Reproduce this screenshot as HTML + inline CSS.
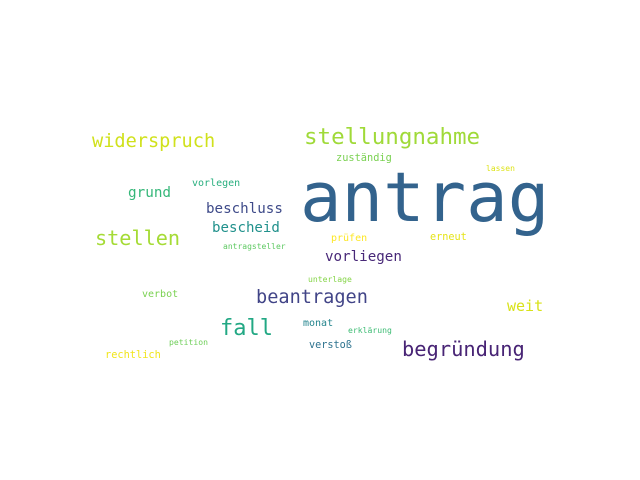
<!DOCTYPE html>
<html><head><meta charset="utf-8"><style>
html,body{margin:0;padding:0;background:#fff;width:640px;height:480px;overflow:hidden}
span{position:absolute;font-family:"DejaVu Sans Mono","Liberation Mono",monospace;line-height:1;white-space:nowrap}
</style></head><body>
<span style="left:300px;top:164px;font-size:69px;color:#33638d">antrag</span>
<span style="left:304px;top:126px;font-size:22.5px;color:#a0da39">stellungnahme</span>
<span style="left:92px;top:133px;font-size:18.6px;color:#d0e11c">widerspruch</span>
<span style="left:336px;top:153px;font-size:10.3px;color:#7ad151">zuständig</span>
<span style="left:486px;top:165px;font-size:8px;color:#dde318">lassen</span>
<span style="left:128px;top:186px;font-size:14.3px;color:#35b779">grund</span>
<span style="left:192px;top:179px;font-size:10px;color:#29af7f">vorlegen</span>
<span style="left:206px;top:202px;font-size:14.2px;color:#3e4a89">beschluss</span>
<span style="left:212px;top:221px;font-size:14.1px;color:#21918c">bescheid</span>
<span style="left:95px;top:228px;font-size:20.2px;color:#a5db36">stellen</span>
<span style="left:223px;top:243px;font-size:8px;color:#5ec962">antragsteller</span>
<span style="left:331px;top:234px;font-size:10px;color:#fde725">prüfen</span>
<span style="left:430px;top:233px;font-size:10.2px;color:#e5e419">erneut</span>
<span style="left:325px;top:250px;font-size:14.2px;color:#482878">vorliegen</span>
<span style="left:308px;top:275px;font-size:8.1px;color:#86d549">unterlage</span>
<span style="left:142px;top:290px;font-size:10px;color:#7ad151">verbot</span>
<span style="left:256px;top:289px;font-size:18.6px;color:#414487">beantragen</span>
<span style="left:507px;top:299px;font-size:15px;color:#d8e219">weit</span>
<span style="left:220px;top:318px;font-size:22px;color:#22a884">fall</span>
<span style="left:303px;top:319px;font-size:10px;color:#25858e">monat</span>
<span style="left:348px;top:326px;font-size:8.1px;color:#3dbc74">erklärung</span>
<span style="left:169px;top:338px;font-size:8.1px;color:#6ece58">petition</span>
<span style="left:309px;top:341px;font-size:10.2px;color:#2c728e">verstoß</span>
<span style="left:402px;top:339px;font-size:20.4px;color:#482475">begründung</span>
<span style="left:105px;top:350px;font-size:10.3px;color:#f1e51d">rechtlich</span>
</body></html>
